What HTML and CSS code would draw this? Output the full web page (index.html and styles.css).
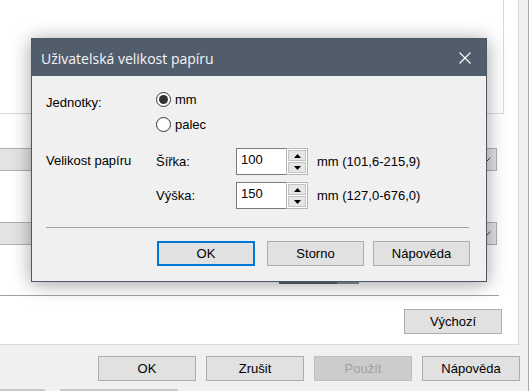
FILE: index.html
```html
<!DOCTYPE html>
<html lang="cs">
<head>
<meta charset="utf-8">
<title>Uživatelská velikost papíru</title>
<link rel="stylesheet" href="styles.css">
</head>
<body>
<div class="window">
  <div class="page">
    <div class="group"></div>
    <div class="combo c1">
      <svg class="chev" width="11" height="6" viewBox="0 0 11 6"><path d="M0.5 0.5 L5.5 5.5 L10.5 0.5" fill="none" stroke="#444" stroke-width="1"/></svg>
    </div>
    <div class="combo c2">
      <svg class="chev" width="11" height="6" viewBox="0 0 11 6"><path d="M0.5 0.5 L5.5 5.5 L10.5 0.5" fill="none" stroke="#444" stroke-width="1"/></svg>
    </div>
    <div class="track"><span class="thumb"></span><span class="thumb-end"></span></div>
    <div class="page-sep"></div>
    <div class="def-row"><button class="btn">Výchozí</button></div>
  </div>
  <div class="actions">
    <button class="btn">OK</button>
    <button class="btn">Zrušit</button>
    <button class="btn disabled">Použít</button>
    <button class="btn">Nápověda</button>
  </div>
  <div class="bottom-strip"><span class="seg s1"></span><span class="seg s2"></span></div>

  <div class="dialog">
    <div class="titlebar">
      <span class="title">Uživatelská velikost papíru</span>
      <svg class="close" width="12" height="12" viewBox="0 0 12 12"><path d="M0.5 0.5 L11.5 11.5 M11.5 0.5 L0.5 11.5" stroke="#ffffff" stroke-width="1.1" fill="none"/></svg>
    </div>
    <div class="dlg-body">
      <div class="row units-row">
        <span class="lbl lbl-units">Jednotky:</span>
        <div class="radios">
          <label class="radio checked"><span class="circle"></span>mm</label>
          <label class="radio"><span class="circle"></span>palec</label>
        </div>
      </div>
      <div class="row size-row">
        <span class="lbl lbl-size">Velikost papíru</span>
        <div class="fields">
          <div class="field">
            <span class="flbl">Šířka:</span>
            <div class="spin">
              <span class="edit">100</span>
              <span class="arrows">
                <span class="arr up"><svg width="7" height="4" viewBox="0 0 7 4"><path d="M0 4 L3.5 0 L7 4 Z" fill="#000"/></svg></span>
                <span class="arr down"><svg width="7" height="4" viewBox="0 0 7 4"><path d="M0 0 L3.5 4 L7 0 Z" fill="#000"/></svg></span>
              </span>
            </div>
            <span class="range">mm (101,6-215,9)</span>
          </div>
          <div class="field">
            <span class="flbl">Výška:</span>
            <div class="spin">
              <span class="edit">150</span>
              <span class="arrows">
                <span class="arr up"><svg width="7" height="4" viewBox="0 0 7 4"><path d="M0 4 L3.5 0 L7 4 Z" fill="#000"/></svg></span>
                <span class="arr down"><svg width="7" height="4" viewBox="0 0 7 4"><path d="M0 0 L3.5 4 L7 0 Z" fill="#000"/></svg></span>
              </span>
            </div>
            <span class="range">mm (127,0-676,0)</span>
          </div>
        </div>
      </div>
      <div class="dlg-sep"></div>
      <div class="dlg-buttons">
        <button class="btn default">OK</button>
        <button class="btn storno">Storno</button>
        <button class="btn help">Nápověda</button>
      </div>
    </div>
  </div>
</div>
</body>
</html>
```

FILE: styles.css
```css
* { box-sizing: border-box; }
html, body { margin: 0; padding: 0; }
body {
  width: 531px;
  height: 391px;
  overflow: hidden;
  background: #ffffff;
  font-family: "Liberation Sans", Arial, sans-serif;
  font-size: 13px;
  color: #000;
}
.window {
  position: relative;
  width: 529px;
  height: 391px;
  background: #f0f0f0;
  border-right: 1px solid #a9a9a9;
}
.page {
  width: 519px;
  height: 345px;
  background: #ffffff;
  border-right: 1px solid #d9d9d9;
  border-bottom: 1px solid #d9d9d9;
  display: flex;
  flex-direction: column;
}
.group {
  width: 504px;
  height: 114px;
  border-right: 1px solid #dadada;
  border-bottom: 1px solid #dadada;
  flex: none;
}
.combo {
  flex: none;
  width: 497px;
  height: 23px;
  background: #e3e3e3;
  border: 1px solid #b0b0b0;
  border-left: none;
  display: flex;
  justify-content: flex-end;
  align-items: center;
  padding-right: 5px;
}
.c1 { margin-top: 34px; }
.c2 { margin-top: 51px; }
.chev { display: block; margin-top: 1px; }
.track {
  flex: none;
  margin-top: 37px;
  height: 2px;
  display: flex;
  padding-left: 279px;
}
.thumb { width: 58px; height: 2px; background: #5d6168; }
.thumb-end { width: 22px; height: 2px; background: #8b8f95; }
.page-sep {
  flex: none;
  margin-top: 11px;
  width: 499px;
  height: 1px;
  background: #a0a0a0;
}
.def-row {
  flex: none;
  margin-top: 13px;
  padding-left: 404px;
}
.btn {
  font-family: "Liberation Sans", Arial, sans-serif;
  font-size: 13px;
  color: #000;
  width: 98px;
  height: 25px;
  padding: 0;
  margin: 0;
  background: #e1e1e1;
  border: 1px solid #adadad;
  border-radius: 0;
  display: flex;
  align-items: center;
  justify-content: center;
}
.btn.disabled { color: #a0a0a0; background: #cccccc; border-color: #bfbfbf; }
.actions {
  display: flex;
  gap: 10px;
  padding-left: 98px;
  margin-top: 11px;
}
.bottom-strip {
  position: absolute;
  left: 0;
  top: 389px;
  width: 528px;
  height: 2px;
  display: flex;
}
.seg { height: 2px; display: block; }
.s1 { width: 45px; background: #c9c9c9; }
.s2 { width: 118px; margin-left: 15px; background: #c9c9c9; }

/* dialog */
.dialog {
  position: absolute;
  left: 31px;
  top: 38px;
  width: 456px;
  height: 244px;
  background: #f0f0f0;
  border: 1px solid #4d5867;
  box-shadow: 0 2px 18px rgba(0, 0, 0, 0.38);
}
.titlebar {
  height: 37px;
  background: #525d6c;
  display: flex;
  align-items: center;
  justify-content: space-between;
  padding: 0 15px 0 9px;
}
.title {
  font-family: "Open Sans", "Noto Sans", sans-serif;
  font-size: 14px;
  color: #f4f5f7;
  padding-top: 1px;
}
.close { display: block; margin-top: 1px; }
.dlg-body {
  padding: 16px 0 0 14px;
}
.row { display: flex; }
.lbl { width: 110px; flex: none; }
.lbl-units { padding-top: 3px; }
.radios { display: flex; flex-direction: column; gap: 10px; }
.radio {
  display: flex;
  align-items: center;
  height: 15px;
  line-height: 15px;
}
.circle {
  width: 15px;
  height: 15px;
  border-radius: 50%;
  border: 1px solid #333;
  background: #fff;
  margin-right: 4px;
  display: flex;
  align-items: center;
  justify-content: center;
}
.radio.checked .circle::after {
  content: "";
  width: 9px;
  height: 9px;
  border-radius: 50%;
  background: #333;
}
.size-row { margin-top: 16px; }
.lbl-size { padding-top: 5px; }
.fields { display: flex; flex-direction: column; gap: 7px; }
.field { display: flex; align-items: center; height: 27px; }
.flbl { width: 80px; flex: none; }
.spin { display: flex; height: 27px; }
.edit {
  width: 50px;
  height: 27px;
  background: #fff;
  border: 1px solid #7a7a7a;
  border-right: none;
  padding: 2px 0 0 4px;
  line-height: 17px;
}
.arrows {
  width: 22px;
  height: 27px;
  border: 1px solid #b5b5b5;
  background: #fff;
  padding: 1px;
  display: flex;
  flex-direction: column;
  gap: 1px;
}
.arr {
  flex: 1;
  background: #e6e6e6;
  border: 1px solid #c4c4c4;
  display: flex;
  align-items: center;
  justify-content: center;
}
.range { margin-left: 9px; }
.dlg-sep {
  margin-top: 18px;
  width: 423px;
  height: 1px;
  background: #a0a0a0;
}
.dlg-buttons {
  margin-top: 13px;
  display: flex;
  padding-left: 111px;
}
.dlg-buttons .btn.default { width: 98px; border: 2px solid #0078d7; }
.dlg-buttons .storno { width: 97px; margin-left: 12px; }
.dlg-buttons .help { width: 97px; margin-left: 9px; }
```
